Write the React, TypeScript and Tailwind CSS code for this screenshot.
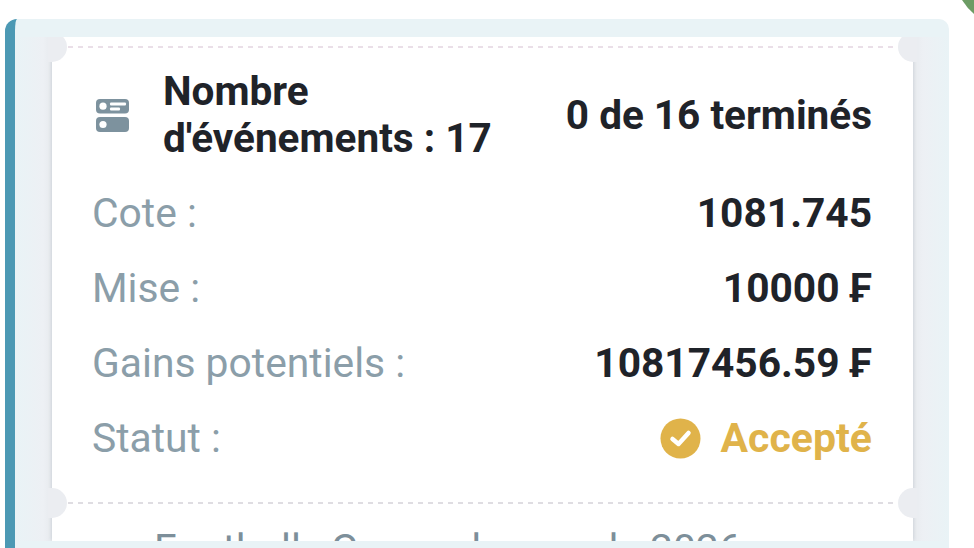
const FONT = { fontFamily: "Roboto, sans-serif" };
const DASHES = "bg-[repeating-linear-gradient(to_right,#dfdde2_0,#dfdde2_5px,transparent_5px,transparent_10px)]";
const PINK_DASHES = "bg-[repeating-linear-gradient(to_right,#eadfe8_0,#eadfe8_5px,transparent_5px,transparent_10px)]";

function Notch({ className }: { className: string }) {
  return <span className={`absolute h-[30px] w-[19px] bg-[#ebedf1] ${className}`} />;
}

function TicketIcon() {
  return (
    <svg width="33" height="33" viewBox="0 0 33 33" className="ml-[3px] shrink-0">
      <rect x="0" y="0" width="33" height="14.5" rx="4" fill="#7d929e" />
      <rect x="0" y="18" width="33" height="15" rx="4" fill="#7d929e" />
      <circle cx="7" cy="7.2" r="3.6" fill="#fff" />
      <circle cx="7" cy="25.5" r="3.6" fill="#fff" />
      <rect x="14" y="3.5" width="16" height="3" rx="1" fill="#fff" />
      <rect x="14" y="8.5" width="10" height="3" rx="1" fill="#fff" />
    </svg>
  );
}

function Row({ label, children }: { label: string; children: React.ReactNode }) {
  return (
    <div className="flex h-[75px] items-center justify-between">
      <span className="-ml-px text-[40.8px] text-[#8b9ea9]">{label}</span>
      {children}
    </div>
  );
}

export default function App() {
  return (
    <div className="relative h-[548px] w-[974px] overflow-hidden bg-white" style={FONT}>
      <svg width="12" height="14" viewBox="0 0 12 14" className="absolute right-0 top-0">
        <path d="M0 0 L12 0 L12 14 Q5 8 0 0 Z" fill="#6c9c64" />
      </svg>
      <div className="ml-[5px] mt-[19px] h-[560px] w-[944px] overflow-hidden rounded-tl-[12px] rounded-tr-[10px] border-l-[10px] border-[#4c99b4] bg-[#e9f3f6] pt-[18px]">
        <div className="h-[504px] overflow-hidden bg-[linear-gradient(to_right,#e9f3f6_0,#edf0f4_28px,#e7eaee_37px,#e7eaee_898px,#edf0f4_908px,#e9f3f6_934px)] pl-[37px] pr-[36px]">
          <div className="relative h-full bg-white px-[41px] shadow-[-2px_0_3px_-1px_#cfd4da,2px_0_3px_-1px_#cfd4da]">
            <Notch className="-left-[4px] -top-[5px] rounded-r-[15px]" />
            <Notch className="-right-[4px] -top-[5px] rounded-l-[15px]" />
            <Notch className="-left-[4px] top-[451px] rounded-r-[15px]" />
            <Notch className="-right-[4px] top-[451px] rounded-l-[15px]" />
            <div className={`absolute left-[16px] right-[16px] top-[9px] h-[2px] ${PINK_DASHES}`} />
            <div className="flex items-center justify-between pt-[31px]">
              <div className="flex items-center gap-[34px]">
                <TicketIcon />
                <div className="text-[40.5px] font-bold leading-[47px] text-[#1f2329]">
                  Nombre
                  <br />
                  d'événements : 17
                </div>
              </div>
              <div className="text-[40.5px] font-bold text-[#1f2329]">0 de 16 terminés</div>
            </div>
            <div className="mt-[14px]">
              <Row label="Cote :">
                <span className="text-[40.7px] font-bold text-[#1f2329]">1081.745</span>
              </Row>
              <Row label="Mise :">
                <span className="text-[40.7px] font-bold text-[#1f2329]">10000 ₣</span>
              </Row>
              <Row label="Gains potentiels :">
                <span className="text-[40.7px] font-bold text-[#1f2329]">10817456.59 ₣</span>
              </Row>
              <Row label="Statut :">
                <span className="flex items-center gap-[20px] text-[41px] font-bold text-[#e0b34a]">
                  <svg width="41" height="41" viewBox="0 0 41 41">
                    <circle cx="20.5" cy="20.5" r="20" fill="#e0b34a" />
                    <path d="M12.5 21 L18.5 26 L28.5 15" fill="none" stroke="#fff" strokeWidth="4.5" strokeLinecap="round" strokeLinejoin="round" />
                  </svg>
                  Accepté
                </span>
              </Row>
            </div>
            <div className={`absolute left-[16px] right-[16px] top-[465px] h-[2px] ${DASHES}`} />
            <div className="absolute left-[102px] top-[489px] whitespace-nowrap text-[40.8px] leading-[47px] text-[#7d8f9a]">
              Football : Coupe du monde 2026
            </div>
          </div>
        </div>
      </div>
    </div>
  );
}
